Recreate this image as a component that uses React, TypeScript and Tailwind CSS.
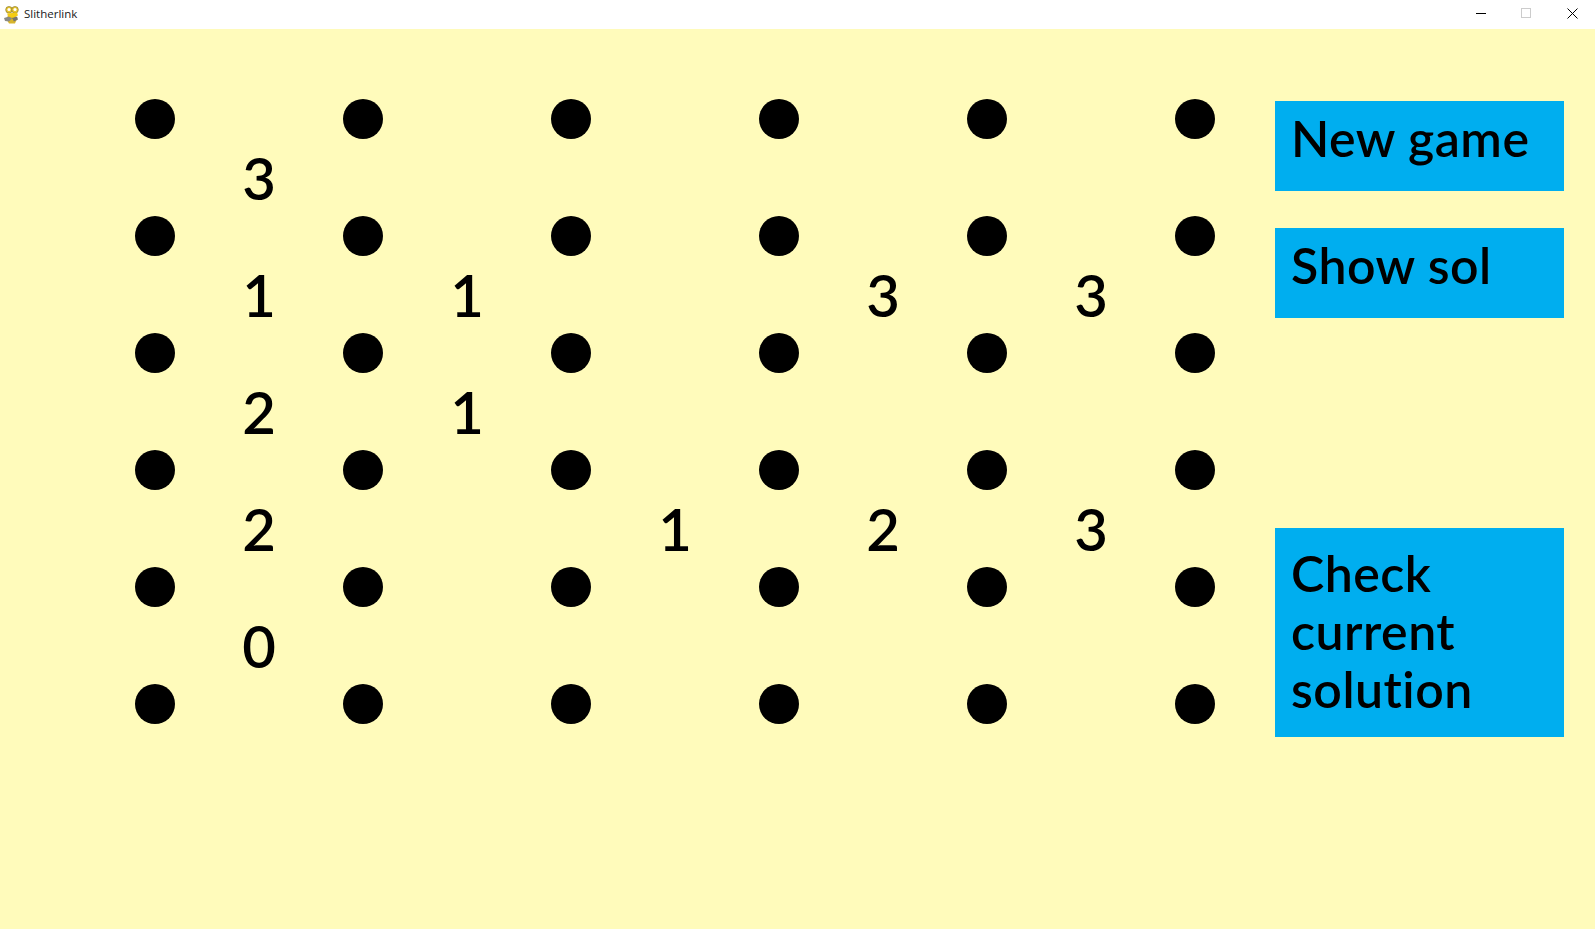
const puzzle: (number | null)[][] = [
  [3, null, null, null, null],
  [1, 1, null, 3, 3],
  [2, 1, null, null, null],
  [2, null, 1, 2, 3],
  [0, null, null, null, null],
];

function PygameIcon() {
  return (
    <svg width="16" height="18" viewBox="0 0 16 18" aria-hidden="true">
      {/* body */}
      <path d="M4 8 L3 14 L5 17.5 L11 17.5 L12.5 14 L11.5 8 Z" fill="#d8b52a" />
      {/* joystick */}
      <path d="M0 12 L5 10.5 L8 12.5 L5 15.5 L1 15 Z" fill="#8a8a84" />
      <path d="M8 12 L13 10.5 L14 13.5 L10 15.5 Z" fill="#77756c" />
      {/* eyes */}
      <circle cx="5" cy="3.8" r="3.3" fill="#e8c62e" stroke="#8d7a2a" strokeWidth="0.7" />
      <circle cx="11" cy="3.8" r="3.3" fill="#e8c62e" stroke="#8d7a2a" strokeWidth="0.7" />
      <circle cx="5" cy="3.4" r="1.5" fill="#fff" />
      <circle cx="11" cy="3.4" r="1.5" fill="#fff" />
      {/* mouth */}
      <path d="M3 7.5 L13 6.5 L14 9.5 L9 11.5 L4.5 10.5 Z" fill="#f5cc12" />
    </svg>
  );
}

function TitleBar() {
  return (
    <header className="flex h-[29px] items-center justify-between bg-white">
      <div className="flex items-center">
        <div className="ml-1 flex">
          <PygameIcon />
        </div>
        <span className="ml-1 mt-[-2px] font-['Open_Sans',sans-serif] text-[11.5px] text-[#1a1a1a]">Slitherlink</span>
      </div>
      <div className="flex items-center">
        <span className="flex h-[29px] w-[45px] items-center justify-center">
          <span className="mt-[-3px] h-px w-[10px] bg-black" />
        </span>
        <span className="mr-[1.5px] flex h-[29px] w-[45px] items-center justify-center">
          <span className="mt-[-3px] h-[10px] w-[10px] border border-[#cccccc]" />
        </span>
        <span className="flex h-[29px] w-[45px] items-center justify-center">
          <svg className="mt-[-3px]" width="11" height="11" viewBox="0 0 11 11" aria-hidden="true">
            <path d="M0.5 0.5 L10.5 10.5 M10.5 0.5 L0.5 10.5" stroke="#000" strokeWidth="1" fill="none" />
          </svg>
        </span>
      </div>
    </header>
  );
}

function Board() {
  const cells = [];
  for (let r = 0; r < 11; r++) {
    for (let c = 0; c < 11; c++) {
      if (r % 2 === 0 && c % 2 === 0) {
        cells.push(<div key={`${r}-${c}`} className="h-10 w-10 rounded-full bg-black" />);
      } else if (r % 2 === 1 && c % 2 === 1) {
        const value = puzzle[(r - 1) / 2][(c - 1) / 2];
        cells.push(
          <div key={`${r}-${c}`} className="flex items-center justify-center font-['Lato',sans-serif] text-[58px] leading-none font-semibold text-black">
            {value}
          </div>
        );
      } else {
        cells.push(<div key={`${r}-${c}`} />);
      }
    }
  }

  return (
    <div className="grid grid-cols-[repeat(5,40px_168px)_40px] grid-rows-[repeat(5,40px_77px)_40px]">
      {cells}
    </div>
  );
}

function GameButton({ lines, className }: { lines: string[]; className: string }) {
  return (
    <button className={`flex w-[289px] flex-col items-start bg-[#00aeef] pl-4 font-['Lato',sans-serif] text-[50px] leading-[58px] font-semibold tracking-[0.5px] text-black ${className}`}>
      {lines.map((line) => (
        <span key={line}>{line}</span>
      ))}
    </button>
  );
}

export default function App() {
  return (
    <div className="h-[929px] w-[1595px] overflow-hidden bg-[#fffbbb]">
      <TitleBar />
      <main className="flex pl-[135px] pt-[70px]">
        <Board />
        <div className="ml-[60px] mt-[2px] flex flex-col">
          <GameButton lines={["New game"]} className="h-[90px] pt-2" />
          <GameButton lines={["Show sol"]} className="mt-[37px] h-[90px] pt-2" />
          <GameButton lines={["Check", "current", "solution"]} className="mt-[210px] h-[209px] pt-4" />
        </div>
      </main>
    </div>
  );
}
